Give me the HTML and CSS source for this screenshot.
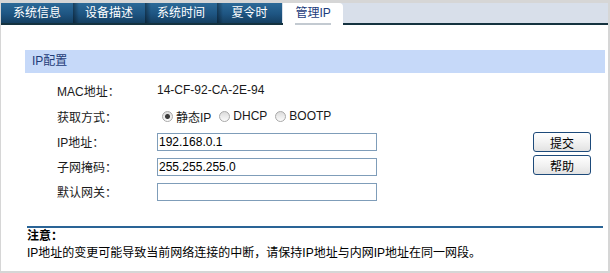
FILE: index.html
```html
<!DOCTYPE html>
<html lang="zh-CN">
<head>
  <meta charset="UTF-8">
  <title>管理IP</title>
  <link rel="stylesheet" href="styles.css">
</head>
<body>
  <div class="frame">
    <ul class="tabs">
      <li>系统信息</li>
      <li>设备描述</li>
      <li>系统时间</li>
      <li>夏令时</li>
      <li class="active"><span>管理IP</span></li>
    </ul>
    <div class="main">
      <div class="section-title">IP配置</div>
      <div class="form-grid">
        <div class="label">MAC地址：</div>
        <div class="value">14-CF-92-CA-2E-94</div>
        <div></div>

        <div class="label">获取方式：</div>
        <div class="value radios">
          <label class="opt"><input type="radio" name="mode" checked><span>静态IP</span></label>
          <label class="opt"><input type="radio" name="mode"><span>DHCP</span></label>
          <label class="opt"><input type="radio" name="mode"><span>BOOTP</span></label>
        </div>
        <div></div>

        <div class="label">IP地址：</div>
        <div class="value"><input class="field" type="text" value="192.168.0.1"></div>
        <div class="btn-cell"><button class="btn btn-submit">提交</button></div>

        <div class="label">子网掩码：</div>
        <div class="value"><input class="field" type="text" value="255.255.255.0"></div>
        <div class="btn-cell"><button class="btn btn-help">帮助</button></div>

        <div class="label">默认网关：</div>
        <div class="value"><input class="field" type="text" value=""></div>
        <div></div>
      </div>
      <div class="note">
        <div class="note-title">注意：</div>
        <div class="note-text">IP地址的变更可能导致当前网络连接的中断，请保持IP地址与内网IP地址在同一网段。</div>
      </div>
    </div>
  </div>
</body>
</html>
```

FILE: styles.css
```css
  body {
    margin: 0;
    font-family: "Liberation Sans", "Noto Sans CJK SC", sans-serif;
    font-size: 12px;
    color: #111;
  }
  .frame {
    width: 607px;
    height: 268px;
    border-style: solid;
    border-color: #d6d6d6;
    border-width: 3px 2px 2px 1px;
    background: #fff;
  }
  .tabs {
    display: flex;
    margin: 0;
    padding: 0;
    list-style: none;
    height: 20px;
    background: #d8dfea;
    border-bottom: 2px solid #14323f;
  }
  .tabs li {
    min-width: 48px;
    padding: 0 12px;
    height: 20px;
    line-height: 20px;
    text-align: center;
    color: #fff;
    background: linear-gradient(#2c6a98, #1e5582 55%, #153f61);
  }
  .tabs li + li {
    background: linear-gradient(to right, rgba(0, 0, 0, 0.4), rgba(0, 0, 0, 0) 6px),
                linear-gradient(#2c6a98, #1e5582 55%, #153f61);
  }
  .tabs li:nth-child(4) {
    min-width: 41px;
  }
  .tabs li.active {
    margin-left: 1px;
    height: 22px;
    min-width: 36px;
    background: #fff;
    color: #1c3c7c;
    border-radius: 0 4px 0 0;
  }
  .tabs li.active span {
    display: inline-block;
    line-height: 19px;
    border-bottom: 2px solid #c3cad1;
  }
  .main {
    padding-top: 25px;
  }
  .section-title {
    margin: 0 3px 0 24px;
    height: 23px;
    line-height: 23px;
    padding-left: 7px;
    background: #c6d9f9;
    color: #1f3c78;
  }
  .form-grid {
    display: grid;
    grid-template-columns: 100px 1fr 58px;
    grid-template-rows: 26px 26px 25px 25px 25px;
    align-items: center;
    margin-top: 4px;
    padding: 0 17px 0 56px;
  }
  .label {
    color: #1a1a1a;
  }
  .value {
    color: #1a1a1a;
  }
  .radios {
    display: flex;
    align-items: center;
  }
  .opt {
    display: flex;
    align-items: center;
    margin-left: 8px;
  }
  .opt:first-child {
    margin-left: 5px;
  }
  .opt input {
    appearance: none;
    -webkit-appearance: none;
    width: 11px;
    height: 11px;
    margin: 0 3px 0 0;
    border: 1px solid #a9a9a9;
    border-radius: 50%;
    background: linear-gradient(#dcdcdc, #fbfbfb);
  }
  .opt input:checked {
    background: radial-gradient(circle, #3b3b3b 0, #3b3b3b 2px, rgba(0, 0, 0, 0) 3px),
                linear-gradient(#dcdcdc, #fbfbfb);
  }
  .field {
    box-sizing: border-box;
    width: 220px;
    height: 18px;
    margin: 0;
    padding: 0 1px;
    border: 1px solid #7f9db9;
    font-family: "Liberation Sans", "Noto Sans CJK SC", sans-serif;
    font-size: 12px;
    color: #000;
    outline: none;
  }
  .btn {
    width: 58px;
    height: 20px;
    padding: 0;
    border: 1px solid #1d4a7a;
    border-radius: 3px;
    background: linear-gradient(#ffffff, #f2f2f2 50%, #e2e2e2);
    font-family: "Liberation Sans", "Noto Sans CJK SC", sans-serif;
    font-size: 12px;
    color: #000;
  }
  .btn-submit {
    margin-top: 1px;
  }
  .btn-help {
    margin-top: -3px;
  }
  .note {
    margin: 22px 5px 0 26px;
    border-top: 2px solid #2a6496;
    line-height: 17px;
    color: #000;
  }
  .note-title {
    font-weight: bold;
  }
```
